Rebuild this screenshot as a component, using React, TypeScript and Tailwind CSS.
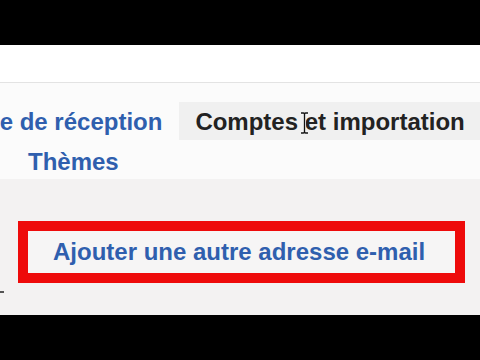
import React from "react";

export default function App() {
  return (
    <div
      className="w-[480px] h-[360px] flex flex-col overflow-hidden bg-white"
      style={{ fontFamily: '"Liberation Sans", Arial, sans-serif' }}
    >
      <div className="h-[45px] shrink-0 bg-black" />
      <div className="h-[38px] shrink-0 bg-white border-b border-[#e3e3e3]" />
      <div className="h-[96px] shrink-0 bg-[#fbfbfb] flex flex-col overflow-hidden">
        <div className="mt-[19px] flex items-stretch h-[38px] text-[24px] leading-[40px] font-bold whitespace-nowrap">
          <span className="ml-[-47px] text-[#2f5fae]">Boîte de réception</span>
          <div className="relative ml-[17px] flex-1 bg-[#f0f0f0] pl-[16px] text-[#222222]">
            Comptes et importation
            <svg
              className="absolute left-[121px] top-[10px]"
              width="9"
              height="22"
              viewBox="0 0 9 22"
            >
              <path
                d="M1 1 H3.5 Q4.5 1 4.5 2.5 V19.5 Q4.5 21 3.5 21 H1 M8 1 H5.5 Q4.5 1 4.5 2.5 M4.5 19.5 Q4.5 21 5.5 21 H8"
                fill="none"
                stroke="#ffffff"
                strokeWidth="3"
              />
              <path
                d="M1 1 H3.5 Q4.5 1 4.5 2.5 V19.5 Q4.5 21 3.5 21 H1 M8 1 H5.5 Q4.5 1 4.5 2.5 M4.5 19.5 Q4.5 21 5.5 21 H8"
                fill="none"
                stroke="#111111"
                strokeWidth="1.4"
              />
            </svg>
          </div>
        </div>
        <div className="ml-[28px] mt-[3px] text-[24px] leading-[38px] font-bold text-[#2f5fae]">
          Thèmes
        </div>
      </div>
      <div className="relative flex-1 bg-[#f3f2f2] pt-[42px] pl-[18px]">
        <div className="w-[447px] h-[62px] border-[10px] border-[#ee0b0b] bg-[#f6f5f5] pl-[25px] text-[24px] leading-[42px] font-bold text-[#2f5fae] whitespace-nowrap">
          Ajouter une autre adresse e-mail
        </div>
        <div className="absolute left-0 top-[112px] w-[4px] h-[2px] bg-[#555555]" />
      </div>
      <div className="h-[45px] shrink-0 bg-black" />
    </div>
  );
}
